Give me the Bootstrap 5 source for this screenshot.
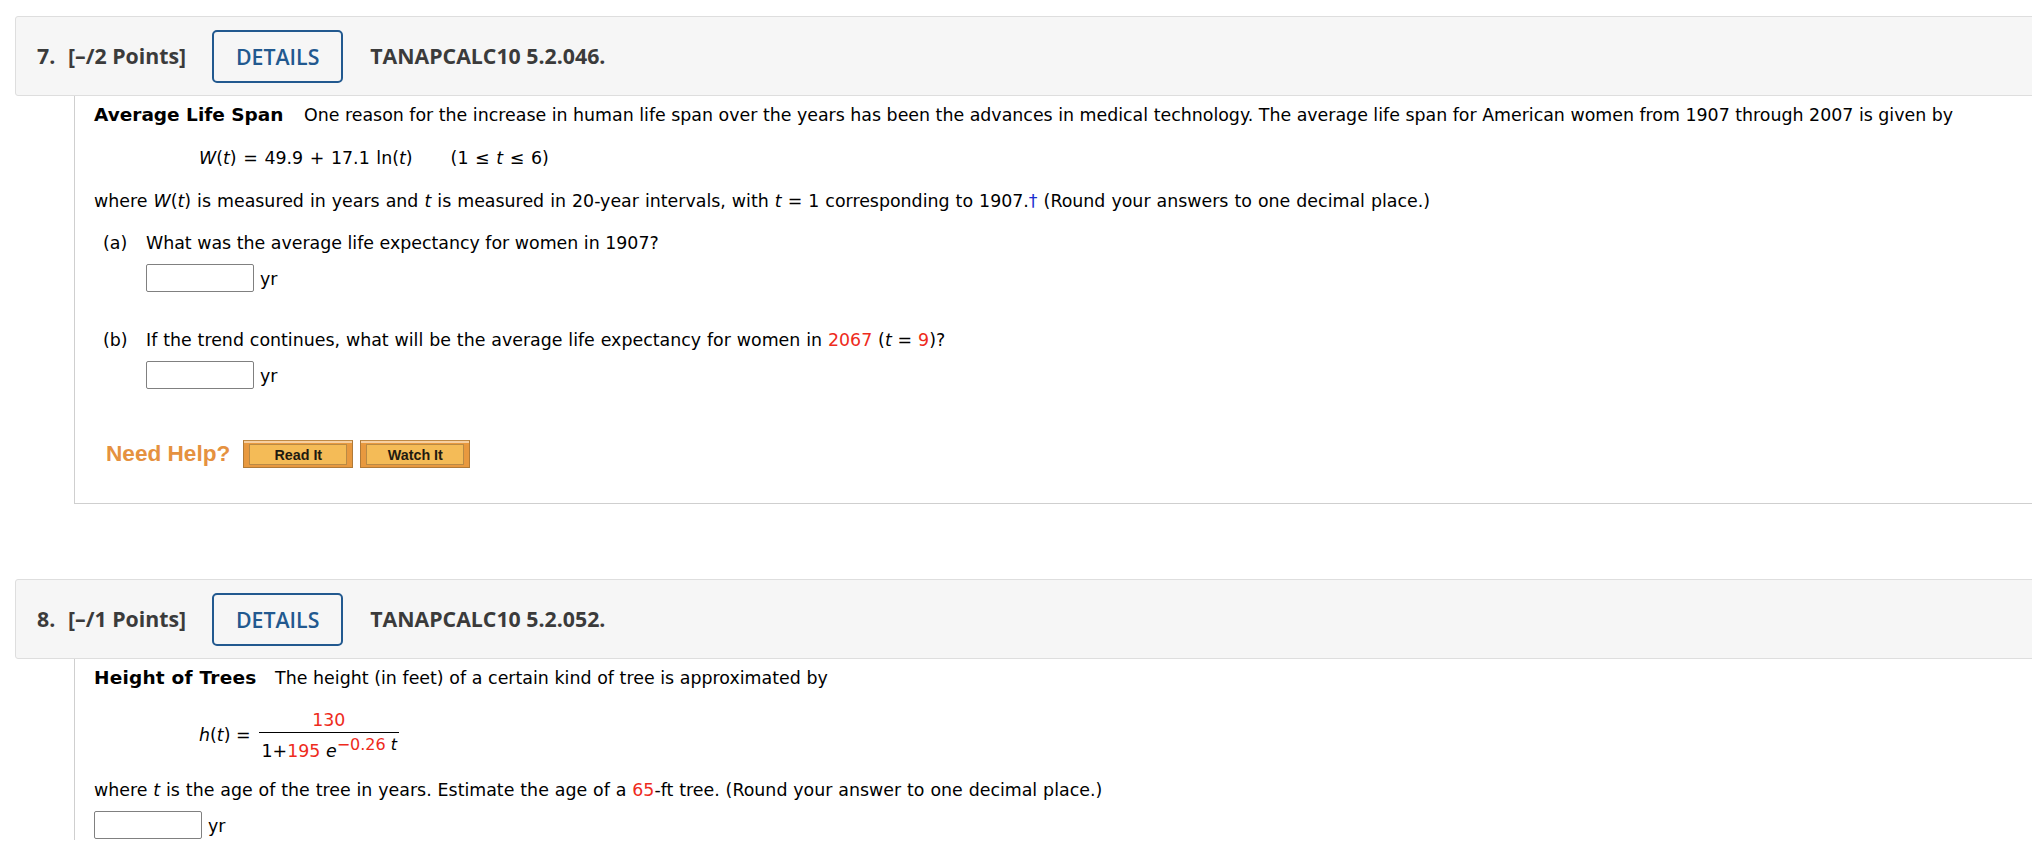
<!DOCTYPE html>
<html lang="en">
<head>
  <title>Assignment questions</title>
  <meta charset="UTF-8">
  <link rel="stylesheet" href="https://cdn.jsdelivr.net/npm/bootstrap@5.3.0/dist/css/bootstrap.min.css">
  <style>
    html, body { overflow-x: hidden; }
    body {
      background: #fff;
      color: #000;
      font-family: "DejaVu Sans", Verdana, sans-serif;
      font-size: 17.4px;
      line-height: 26px;
      padding-top: 16px;
    }
    /* question header */
    .q-head {
      height: 80px;
      margin: 0 -10px 0 15px;
      padding-left: 21px;
      background: #f6f6f6;
      border: 1px solid #dedede;
      border-radius: 3px;
      font-family: "Open Sans", "Liberation Sans", sans-serif;
      font-size: 21.3px;
      font-weight: 700;
      color: #3b3b3b;
      white-space: nowrap;
    }
    .q-num { width: 31px; }
    .q-details {
      width: 131px;
      height: 53px;
      margin: 0 27px 0 26px;
      padding: 0;
      background: #f6f6f6;
      border: 2px solid #22598f;
      border-radius: 5px;
      color: #22598f;
      font-size: 21.3px;
      font-weight: 600;
      line-height: 49px;
    }
    /* question body */
    .q-body {
      margin: 0 -10px 0 74px;
      padding: 6px 0 0 19px;
      border-left: 1px solid #cfcfcf;
      white-space: nowrap;
    }
    .q-first { height: 408px; border-bottom: 1px solid #cfcfcf; margin-bottom: 75px; }
    .q-title { font-weight: 700; margin-right: 15px; font-size: 18.5px; }
    .q-title-tree { letter-spacing: .2px; margin-right: 13px; }
    .q-line { height: 26px; }
    .q-formula { margin: 17px 0 17px 105px; word-spacing: 1.1px; }
    .q-gap { display: inline-block; width: 38px; }
    .q-red { color: #ee2b1c; }
    .q-dagger { color: #1a2ecf; }
    .q-wide { word-spacing: .5px; }
    .q-wide-s { word-spacing: .37px; }
    .q-tight { word-spacing: .15px; }
    .q-part { margin: 16px 0 0 9px; }
    .q-part-b { margin-top: 34px; }
    .q-part-label { width: 43px; }
    .q-answer { margin-top: 8px; min-height: 29px; gap: 6px; }
    .q-input {
      width: 108px;
      height: 28px;
      margin-bottom: 1px;
      padding: 0;
      background: #fff;
      border: 1px solid #808080;
      border-radius: 2px;
    }
    .q-help { margin: 50px 0 0 12px; }
    .q-help-label {
      font-family: "Liberation Sans", Arial, sans-serif;
      font-size: 22.6px;
      font-weight: 700;
      color: #e59140;
      margin-right: 13px;
    }
    .q-help-btn {
      width: 110px;
      height: 28px;
      margin-right: 7px;
      padding: 3px 5px 2px;
      background: #e8993f;
      border: 1px solid #b07a38;
      border-top-color: #c08a45;
      border-radius: 0;
      box-shadow: inset 0 2px 0 #f6cfa0;
    }
    .q-help-btn span {
      display: block;
      height: 100%;
      background: #f4bb57;
      border: 1px solid #b98a45;
      font-family: "Liberation Sans", Arial, sans-serif;
      font-size: 14.3px;
      font-weight: 700;
      line-height: 20px;
      color: #1f1a10;
      text-align: center;
    }
    /* fraction */
    .q-fraction-row { margin: 13px 0 12px 105px; }
    .q-frac { margin-left: 8px; text-align: center; }
    .q-frac-top { height: 29px; padding-top: 3px; border-bottom: 1px solid #000; line-height: 26px; }
    .q-frac-bottom { height: 32px; padding: 0 2px 0 3px; line-height: 36px; }
    .q-frac-bottom sup { font-size: 16px; top: -7px; line-height: 0; position: relative; vertical-align: baseline; }
  </style>
</head>
<body>
  <div class="q-head d-flex align-items-center">
    <span class="q-num">7.</span><span>[–/2 Points]</span>
    <button type="button" class="btn q-details">DETAILS</button>
    <span>TANAPCALC10 5.2.046.</span>
  </div>
  <div class="q-body q-first">
    <div class="q-line"><span class="q-title">Average Life Span</span> One reason for the increase in human life span over the years has been the advances in medical technology. The average life span for American women from 1907 through 2007 is given by</div>
    <div class="q-line q-formula"><i>W</i>(<i>t</i>) = 49.9 + 17.1 ln(<i>t</i>)<span class="q-gap"></span>(1 ≤ <i>t</i> ≤ 6)</div>
    <div class="q-line q-wide">where <i>W</i>(<i>t</i>) is measured in years and <i>t</i> is measured in 20-year intervals, with <i>t</i> = 1 corresponding to 1907.<span class="q-dagger">†</span> (Round your answers to one decimal place.)</div>
    <div class="q-part d-flex">
      <span class="q-part-label">(a)</span>
      <div>
        <div class="q-line">What was the average life expectancy for women in 1907?</div>
        <div class="q-answer d-flex align-items-center"><input class="q-input" type="text" aria-label="a"><span>yr</span></div>
      </div>
    </div>
    <div class="q-part q-part-b d-flex">
      <span class="q-part-label">(b)</span>
      <div>
        <div class="q-line q-wide-s">If the trend continues, what will be the average life expectancy for women in <span class="q-red">2067</span> (<i>t</i> = <span class="q-red">9</span>)?</div>
        <div class="q-answer d-flex align-items-center"><input class="q-input" type="text" aria-label="b"><span>yr</span></div>
      </div>
    </div>
    <div class="q-help d-flex align-items-center">
      <span class="q-help-label">Need Help?</span>
      <button type="button" class="btn q-help-btn"><span>Read It</span></button>
      <button type="button" class="btn q-help-btn"><span>Watch It</span></button>
    </div>
  </div>

  <div class="q-head d-flex align-items-center">
    <span class="q-num">8.</span><span>[–/1 Points]</span>
    <button type="button" class="btn q-details">DETAILS</button>
    <span>TANAPCALC10 5.2.052.</span>
  </div>
  <div class="q-body">
    <div class="q-line q-tight"><span class="q-title q-title-tree">Height of Trees</span> The height (in feet) of a certain kind of tree is approximated by</div>
    <div class="q-fraction-row d-flex align-items-center">
      <span><i>h</i>(<i>t</i>) =</span>
      <div class="q-frac">
        <div class="q-frac-top q-red">130</div>
        <div class="q-frac-bottom">1+<span class="q-red">195</span> <i>e</i><sup><span class="q-red">−0.26</span> <i>t</i></sup></div>
      </div>
    </div>
    <div class="q-line q-wide-s">where <i>t</i> is the age of the tree in years. Estimate the age of a <span class="q-red">65</span>-ft tree. (Round your answer to one decimal place.)</div>
    <div class="q-answer d-flex align-items-center"><input class="q-input" type="text" aria-label="answer"><span>yr</span></div>
  </div>
  <script src="https://cdn.jsdelivr.net/npm/bootstrap@5.3.0/dist/js/bootstrap.bundle.min.js"></script>
</body>
</html>
